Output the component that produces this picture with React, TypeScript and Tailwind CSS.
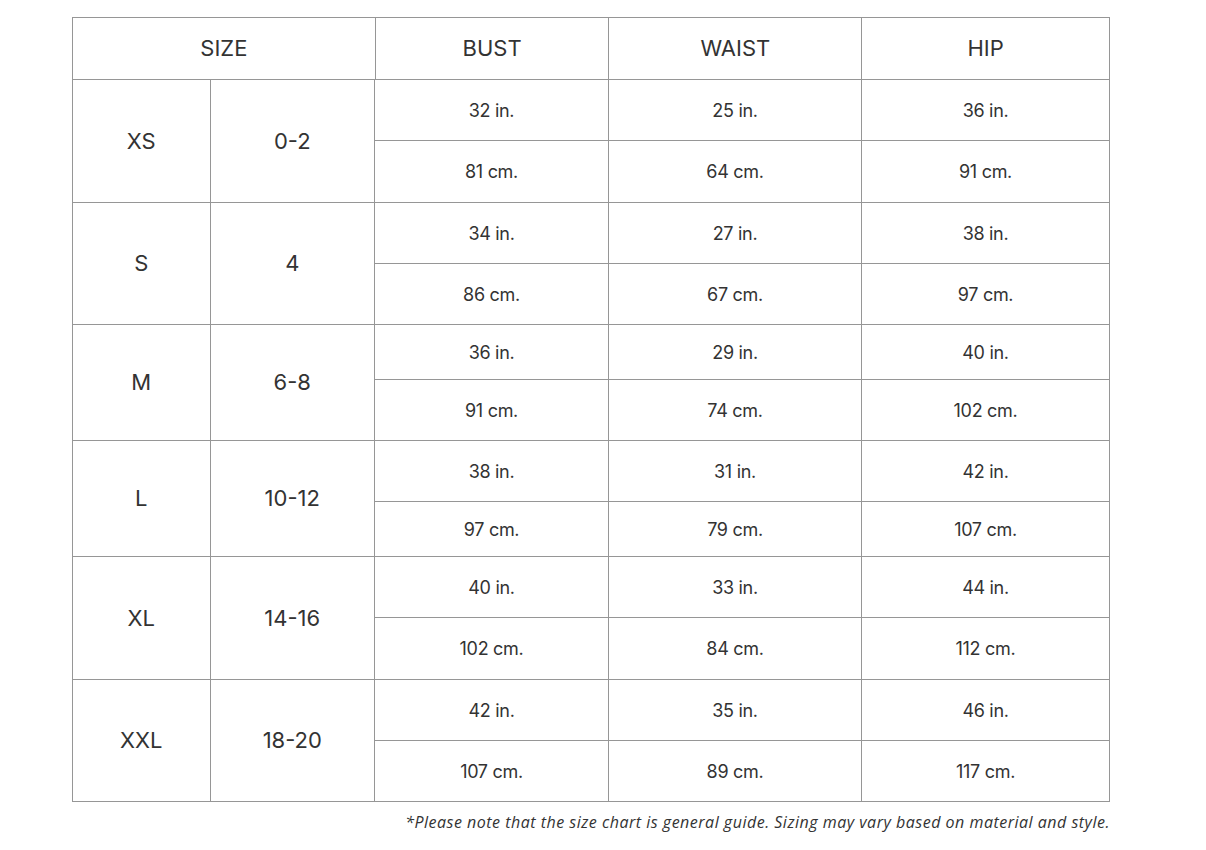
const rows = [
  { size: "XS", num: "0-2", h: ["h-[61px]", "h-[62px]"], inch: ["32 in.", "25 in.", "36 in."], cm: ["81 cm.", "64 cm.", "91 cm."] },
  { size: "S", num: "4", h: ["h-[61px]", "h-[61px]"], inch: ["34 in.", "27 in.", "38 in."], cm: ["86 cm.", "67 cm.", "97 cm."] },
  { size: "M", num: "6-8", h: ["h-[55px]", "h-[61px]"], inch: ["36 in.", "29 in.", "40 in."], cm: ["91 cm.", "74 cm.", "102 cm."] },
  { size: "L", num: "10-12", h: ["h-[61px]", "h-[55px]"], inch: ["38 in.", "31 in.", "42 in."], cm: ["97 cm.", "79 cm.", "107 cm."] },
  { size: "XL", num: "14-16", h: ["h-[61px]", "h-[62px]"], inch: ["40 in.", "33 in.", "44 in."], cm: ["102 cm.", "84 cm.", "112 cm."] },
  { size: "XXL", num: "18-20", h: ["h-[61px]", "h-[61px]"], inch: ["42 in.", "35 in.", "46 in."], cm: ["107 cm.", "89 cm.", "117 cm."] },
];

const widths = ["w-[234px]", "w-[253px]", "w-[248px]"];

const cell = "flex items-center justify-center border-r border-b border-[#969696]";

export default function App() {
  return (
    <div className="min-h-[850px] bg-white pt-[17px] pl-[72px] font-['Inter',sans-serif] text-[#333]">
      <div className="w-[1038px] border-t border-l border-[#969696]">
        {/* header */}
        <div className="flex h-[62px] text-[22px]">
          <div className={`${cell} w-[303px]`}>SIZE</div>
          <div className={`${cell} w-[234px]`}>BUST</div>
          <div className={`${cell} w-[253px]`}>WAIST</div>
          <div className={`${cell} w-[248px]`}>HIP</div>
        </div>

        {rows.map((r) => (
          <div key={r.size} className="flex">
            <div className={`${cell} w-[138px] text-[22px]`}>{r.size}</div>
            <div className={`${cell} w-[165px] text-[22px]`}>{r.num}</div>
            <div className="flex flex-col text-[18px] tracking-[-0.3px]">
              <div className="flex">
                {r.inch.map((v, i) => (
                  <div key={i} className={`${cell} ${widths[i]} ${r.h[0]}`}>{v}</div>
                ))}
              </div>
              <div className="flex">
                {r.cm.map((v, i) => (
                  <div key={i} className={`${cell} ${widths[i]} ${r.h[1]}`}>{v}</div>
                ))}
              </div>
            </div>
          </div>
        ))}
      </div>

      <p className="w-[1038px] mt-[8px] text-right font-['Open_Sans',sans-serif] italic text-[16px] tracking-[0.5px] text-[#333]">
        *Please note that the size chart is general guide. Sizing may vary based on material and style.
      </p>
    </div>
  );
}
